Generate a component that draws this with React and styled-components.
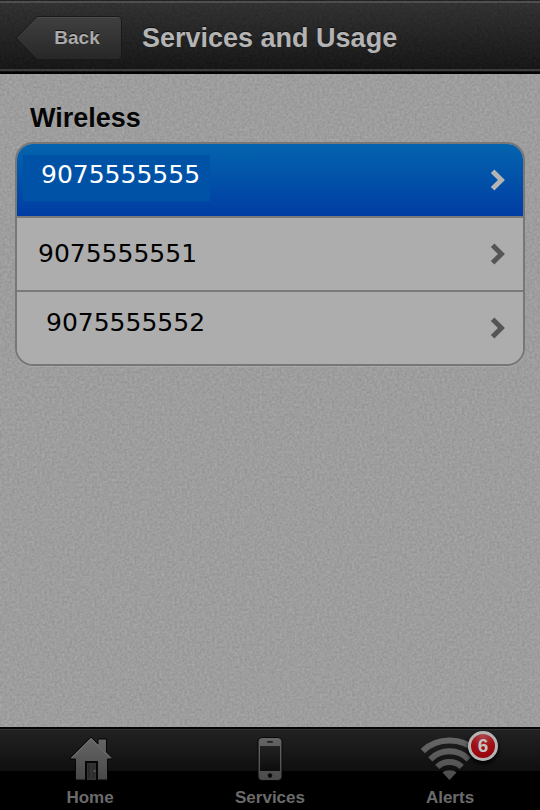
import React, { useState } from 'react';
import styled, { createGlobalStyle } from 'styled-components';

const lines = [
    { number: '9075555555', indent: 24, raised: true },
    { number: '9075555551', indent: 21, raised: false },
    { number: '9075555552', indent: 29, raised: true },
];

function Grain({ id, strength }) {
    return (
        <GrainLayer aria-hidden="true">
            <filter id={id} x="0" y="0" width="100%" height="100%" colorInterpolationFilters="sRGB">
                <feTurbulence type="fractalNoise" baseFrequency="0.4" numOctaves="3" seed="4" />
                <feColorMatrix values="1 0 0 0 0  1 0 0 0 0  1 0 0 0 0  0 0 0 0 1" />
            </filter>
            <rect width="100%" height="100%" filter={`url(#${id})`} opacity={strength} />
        </GrainLayer>
    )
}

function Chevron() {
    return (
        <svg width="16" height="24" viewBox="0 0 16 24" aria-hidden="true">
            <path d="M2.6 3.2 L11.4 12 L2.6 20.8" fill="none" stroke="currentColor" strokeWidth="5" />
        </svg>
    )
}

function HomeIcon() {
    return (
        <svg width="44" height="46" viewBox="0 0 44 46" aria-hidden="true">
            <defs>
                <linearGradient id="homeFill" x1="0" y1="0" x2="0" y2="1">
                    <stop offset="0" stopColor="#666" />
                    <stop offset="1" stopColor="#484848" />
                </linearGradient>
            </defs>
            <path d="M23 1 L30 8 V3 H38.500 V16 L44 21.500 V23 H39.500 V44 H7.500 V23 H2.500 V21.500 Z" fill="url(#homeFill)" stroke="#060606" strokeWidth="1" />
            <path d="M4 22 L23 3 L42 22" fill="none" stroke="#6c6c6c" strokeWidth="1" />
            <path d="M18 44 V26 H29 V44" fill="#333" stroke="#060606" strokeWidth="2" />
            <path d="M21 29 V42 M25.500 29 V42" stroke="#292929" strokeWidth="1.500" />
            <circle cx="26.500" cy="35" r="1" fill="#666" />
        </svg>
    )
}

function PhoneIcon() {
    return (
        <svg width="28" height="46" viewBox="0 0 28 46" aria-hidden="true">
            <defs>
                <linearGradient id="phoneFill" x1="0" y1="0" x2="0" y2="1">
                    <stop offset="0" stopColor="#656565" />
                    <stop offset="1" stopColor="#4a4a4a" />
                </linearGradient>
                <linearGradient id="screenFill" x1="0" y1="0" x2="0" y2="1">
                    <stop offset="0" stopColor="#222" />
                    <stop offset="1" stopColor="#0c0c0c" />
                </linearGradient>
            </defs>
            <rect x="2" y="1.500" width="24" height="43" rx="4" fill="url(#phoneFill)" stroke="#070707" />
            <rect x="4" y="10" width="20" height="25" fill="url(#screenFill)" />
            <rect x="11" y="5" width="6" height="1.800" rx="0.900" fill="#222" />
            <circle cx="14" cy="39.500" r="2.200" fill="#080808" />
        </svg>
    )
}

function SignalIcon() {
    return (
        <svg width="58" height="46" viewBox="0 0 58 46" aria-hidden="true">
            <defs>
                <linearGradient id="signalFill" gradientUnits="userSpaceOnUse" x1="0" y1="0" x2="0" y2="46">
                    <stop offset="0" stopColor="#676767" />
                    <stop offset="1" stopColor="#4a4a4a" />
                </linearGradient>
            </defs>
            <g fill="none" stroke="url(#signalFill)" strokeWidth="6">
                <path d="M1.800 15 C16 1 41 1 55.200 15" />
                <path d="M9.300 23.300 C20 12.700 37 12.700 47.700 23.300" />
                <path d="M16.300 31 C23 24.300 34 24.300 40.700 31" />
            </g>
            <path d="M21.500 36.500 C25 33.500 32 33.500 35.500 36.500 L28.500 44 Z" fill="url(#signalFill)" />
        </svg>
    )
}

const tabs = [
    { name: 'Home', Icon: HomeIcon },
    { name: 'Services', Icon: PhoneIcon },
    { name: 'Alerts', Icon: SignalIcon, count: 6 },
];

function App() {
    const [selected, setSelected] = useState(lines[0].number);

    return (
        <Page>
            <GlobalStyle />
            <Header>
                <Grain id="headerGrain" strength="0.05" />
                <BackButton type="button">
                    <BackShape viewBox="0 0 108 46" aria-hidden="true">
                        <defs>
                            <linearGradient id="backFill" x1="0" y1="0" x2="0" y2="1">
                                <stop offset="0" stopColor="#404040" />
                                <stop offset="1" stopColor="#272727" />
                            </linearGradient>
                        </defs>
                        <path d="M22 1.500 H103 Q106.500 1.500 106.500 5 V41 Q106.500 44.500 103 44.500 H22 L1 23 Z" fill="url(#backFill)" stroke="#191919" />
                        <path d="M22 2.500 H104" stroke="#4c4c4c" />
                    </BackShape>
                    <span>Back</span>
                </BackButton>
                <Title>Services and Usage</Title>
            </Header>

            <Content>
                <Grain id="pageGrain" strength="0.12" />
                <SectionTitle>Wireless</SectionTitle>
                <LineList>
                    {lines.map((line) => (
                        <li key={line.number}>
                            <LineRow
                                type="button"
                                $active={selected === line.number}
                                onClick={() => setSelected(line.number)}
                            >
                                <LineNumber
                                    $indent={line.indent}
                                    $raised={line.raised}
                                    $active={selected === line.number}
                                >
                                    {line.number}
                                </LineNumber>
                                <Chevron />
                            </LineRow>
                        </li>
                    ))}
                </LineList>
            </Content>

            <TabBar>
                {tabs.map(({ name, Icon, count }) => (
                    <Tab key={name} href={`#${name.toLowerCase()}`}>
                        <TabIcon>
                            <Icon />
                            {count && <Badge>{count}</Badge>}
                        </TabIcon>
                        {name}
                    </Tab>
                ))}
            </TabBar>
        </Page>
    )
}

export default App;

const GlobalStyle = createGlobalStyle`
   * {
       box-sizing: border-box;
   }

   body {
       margin: 0;
       background: #999;
       font-family: "Liberation Sans", Arial, sans-serif;
   }

   button {
       font-family: inherit;
       border: 0;
       padding: 0;
       cursor: pointer;
   }
`

const Page = styled.div`
   min-height: 100vh;
   display: flex;
   flex-direction: column;
`

const GrainLayer = styled.svg`
   position: absolute;
   inset: 0;
   width: 100%;
   height: 100%;
   z-index: -1;
   pointer-events: none;
`

const Header = styled.header`
   position: relative;
   isolation: isolate;
   height: 74px;
   display: flex;
   align-items: center;
   gap: 19px;
   padding: 0 15px;
   background: linear-gradient(#2f2f2f, #101010);
   border-bottom: 2px solid #020202;
   box-shadow: inset 0 1px #1e1e1e, inset 0 3px #4c4c4c, inset 0 -1px #0c0c0c, inset 0 -3px #383838;
`

const BackButton = styled.button`
   position: relative;
   isolation: isolate;
   width: 108px;
   height: 46px;
   padding-left: 16px;
   margin-top: 3px;
   background: none;
   color: #aaa;
   font-size: 19px;
   font-weight: 700;
   text-shadow: 0 -1px #111;
`

const BackShape = styled.svg`
   position: absolute;
   inset: 0;
   z-index: -1;
   fill: none;
`

const Title = styled.h1`
   margin: 3px 0 0;
   color: #b4b4b4;
   font-size: 27px;
   line-height: 32px;
   font-weight: 700;
   text-shadow: 0 -1px #111;
`

const Content = styled.main`
   position: relative;
   isolation: isolate;
   flex: 1;
   padding: 28px 15px;
   background: #a2a2a2;
`

const SectionTitle = styled.h2`
   margin: 0 0 8px 15px;
   color: #050505;
   font-size: 27px;
   line-height: 32px;
   font-weight: 700;
   text-shadow: 0 1px #aaa;
`

const LineList = styled.ul`
   margin: 0;
   padding: 0;
   list-style: none;
   overflow: hidden;
   background: #adadad;
   border: 2px solid #777;
   border-radius: 18px;
   box-shadow: 0 1px #a8a8a8;

   li + li {
       border-top: 2px solid #7a7a7a;
   }
`

const LineRow = styled.button`
   width: 100%;
   height: 72px;
   display: flex;
   align-items: center;
   justify-content: space-between;
   padding-right: 17px;
   background: ${props => props.$active ? 'linear-gradient(#0464ae, #003da3)' : '#adadad'};
   color: ${props => props.$active ? '#b4b4b4' : '#555'};
`

const LineNumber = styled.span`
   margin: 0 0 ${props => props.$raised ? '4px' : '0'} 6px;
   height: 46px;
   padding: 0 10px 0 ${props => props.$indent - 6}px;
   background: ${props => props.$active ? '#0052a7' : 'transparent'};
   color: ${props => props.$active ? '#fff' : '#000'};
   font-family: "DejaVu Sans", Verdana, sans-serif;
   font-size: 25px;
   line-height: ${props => props.$raised ? '40px' : '46px'};
`

const TabBar = styled.nav`
   height: 83px;
   display: grid;
   grid-template-columns: repeat(3, 1fr);
   background: linear-gradient(#222, #0f0f0f 42px, #000 42px);
   border-top: 2px solid #050505;
   box-shadow: inset 0 1px #333;
`

const Tab = styled.a`
   display: flex;
   flex-direction: column;
   align-items: center;
   gap: 6px;
   padding-top: 7px;
   color: #6b6b6b;
   font-size: 17px;
   line-height: 20px;
   font-weight: 700;
   text-decoration: none;
`

const TabIcon = styled.div`
   position: relative;
   height: 46px;
`

const Badge = styled.span`
   position: absolute;
   top: -5px;
   right: -19px;
   width: 30px;
   height: 30px;
   border: 3px solid #b4b4b4;
   border-radius: 50%;
   background: radial-gradient(circle at 50% 0, #b04a4e 0, #a01016 50%, #960008 100%);
   box-shadow: 0 3px 4px #000;
   color: #c4c4c4;
   font-size: 19px;
   line-height: 24px;
   text-align: center;
`
